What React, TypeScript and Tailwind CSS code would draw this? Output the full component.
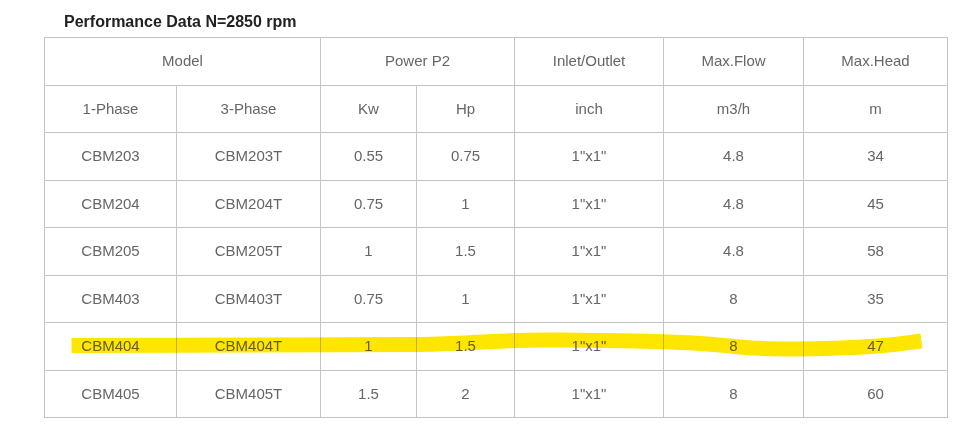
const rows = [
  ["CBM203", "CBM203T", "0.55", "0.75", "1\"x1\"", "4.8", "34"],
  ["CBM204", "CBM204T", "0.75", "1", "1\"x1\"", "4.8", "45"],
  ["CBM205", "CBM205T", "1", "1.5", "1\"x1\"", "4.8", "58"],
  ["CBM403", "CBM403T", "0.75", "1", "1\"x1\"", "8", "35"],
  ["CBM404", "CBM404T", "1", "1.5", "1\"x1\"", "8", "47"],
  ["CBM405", "CBM405T", "1.5", "2", "1\"x1\"", "8", "60"],
];

const widths = [132, 144, 96, 98, 149, 140, 144];

export default function App() {
  const cell = "border border-[#c4c4c4] text-center align-middle p-0";
  return (
    <div
      className="relative w-[977px] h-[446px] bg-white text-[15px]"
      style={{ fontFamily: '"Liberation Sans", Arial, sans-serif' }}
    >
      <div className="pl-[64px] pt-[10px] h-[37px] text-[16px] font-bold text-[#222]">
        Performance Data N=2850 rpm
      </div>
      <table className="ml-[44px] border-collapse table-fixed w-[904px] text-[#666]">
        <colgroup>
          {widths.map((w, i) => (
            <col key={i} style={{ width: w }} />
          ))}
        </colgroup>
        <tbody>
          <tr className="h-[48px]">
            <td className={cell} colSpan={2}>Model</td>
            <td className={cell} colSpan={2}>Power P2</td>
            <td className={cell}>Inlet/Outlet</td>
            <td className={cell}>Max.Flow</td>
            <td className={cell}>Max.Head</td>
          </tr>
          <tr className="h-[47px]">
            <td className={cell}>1-Phase</td>
            <td className={cell}>3-Phase</td>
            <td className={cell}>Kw</td>
            <td className={cell}>Hp</td>
            <td className={cell}>inch</td>
            <td className={cell}>m3/h</td>
            <td className={cell}>m</td>
          </tr>
          {rows.map((r) => (
            <tr key={r[0]} className="h-[47.5px]">
              {r.map((v, i) => (
                <td key={i} className={cell}>{v}</td>
              ))}
            </tr>
          ))}
        </tbody>
      </table>
      <svg
        className="absolute left-0 top-0 pointer-events-none mix-blend-multiply"
        width="977"
        height="446"
      >
        <path
          d="M79 345.5 C200 345 320 345 420 344.5 C470 344 500 339 560 340 C640 341 690 341 740 347 C770 350 800 349 840 348 C880 347 900 344 914 342"
          stroke="#ffe600"
          strokeWidth="15"
          strokeLinecap="square"
          fill="none"
        />
      </svg>
    </div>
  );
}
